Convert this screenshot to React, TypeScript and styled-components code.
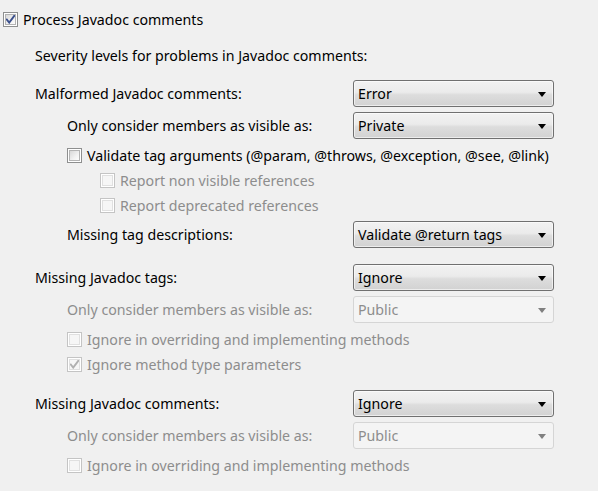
import React from "react";
import styled, { createGlobalStyle, css } from "styled-components";

const Global = createGlobalStyle`
  html, body { margin: 0; padding: 0; background: #f0f0f0; }
  body { font-family: "Noto Sans", "Open Sans", sans-serif; font-size: 14.2px; color: #000; }
`;

const Page = styled.div`
  width: 598px;
  height: 491px;
  padding: 7px 0 0 3px;
  box-sizing: border-box;
  display: flex;
  flex-direction: column;
  overflow: hidden;
`;

const Row = styled.div<{ $mt?: number; $indent?: number; $h?: number }>`
  display: flex;
  align-items: center;
  height: ${(p) => p.$h ?? 25}px;
  margin-top: ${(p) => p.$mt ?? 0}px;
  padding-left: ${(p) => p.$indent ?? 0}px;
  flex-shrink: 0;
`;

const Label = styled.span<{ $disabled?: boolean }>`
  color: ${(p) => (p.$disabled ? "#8d8d8d" : "#000")};
  white-space: nowrap;
`;

const LabelCell = styled.div<{ $indent: number }>`
  width: 350px;
  box-sizing: border-box;
  padding-left: ${(p) => p.$indent}px;
  flex-shrink: 0;
  display: flex;
  align-items: center;
`;

const Box = styled.span<{ $disabled?: boolean }>`
  width: 15px;
  height: 15px;
  box-sizing: border-box;
  flex-shrink: 0;
  border: 1px solid ${(p) => (p.$disabled ? "#c4c4c4" : "#8e8f8f")};
  padding: 1px;
  background: #fff;
  margin-right: 5px;
  display: inline-flex;
`;

const BoxInner = styled.span<{ $disabled?: boolean }>`
  flex: 1;
  display: flex;
  align-items: center;
  justify-content: center;
  ${(p) =>
    p.$disabled
      ? css`
          border: 1px solid #e0e0e0;
          background: #f6f6f6;
        `
      : css`
          border: 1px solid #b3b3b3;
          background: linear-gradient(135deg, #d8d8d8 0%, #f1f1f1 60%, #fdfdfd 100%);
        `}
`;

function Check({ checked, disabled }: { checked?: boolean; disabled?: boolean }) {
  return (
    <Box $disabled={disabled}>
      <BoxInner $disabled={disabled}>
        {checked && (
          <svg width="9" height="9" viewBox="0 0 9 9">
            <path
              d="M0.8 4.6 L3.2 7.6 L8.3 0.8"
              fill="none"
              stroke={disabled ? "#b0b0b0" : "#3a4f8c"}
              strokeWidth="1.9"
              strokeLinecap="square"
            />
          </svg>
        )}
      </BoxInner>
    </Box>
  );
}

const Combo = styled.div<{ $disabled?: boolean }>`
  width: 201px;
  height: 27px;
  box-sizing: border-box;
  border-radius: 3px;
  display: flex;
  align-items: center;
  justify-content: space-between;
  padding: 0 7px 0 4px;
  flex-shrink: 0;
  ${(p) =>
    p.$disabled
      ? css`
          border: 1px solid #d5d5d5;
          background: #f4f4f4;
          color: #8d8d8d;
        `
      : css`
          border: 1px solid #707070;
          background: linear-gradient(#f2f2f2 0%, #ebebeb 45%, #dddddd 55%, #d2d2d2 100%);
          color: #000;
          box-shadow: inset 0 0 0 1px rgba(255, 255, 255, 0.6);
        `}
`;

const Arrow = styled.span<{ $disabled?: boolean }>`
  width: 0;
  height: 0;
  border-left: 4.5px solid transparent;
  border-right: 4.5px solid transparent;
  border-top: 5px solid ${(p) => (p.$disabled ? "#808080" : "#000")};
  margin-top: 1px;
`;

function Select({ value, disabled }: { value: string; disabled?: boolean }) {
  return (
    <Combo $disabled={disabled}>
      <span>{value}</span>
      <Arrow $disabled={disabled} />
    </Combo>
  );
}

function ComboRow({
  label,
  value,
  indent,
  mt,
  disabled,
}: {
  label: string;
  value: string;
  indent: number;
  mt: number;
  disabled?: boolean;
}) {
  return (
    <Row $mt={mt} $h={27}>
      <LabelCell $indent={indent}>
        <Label $disabled={disabled}>{label}</Label>
      </LabelCell>
      <Select value={value} disabled={disabled} />
    </Row>
  );
}

function CheckRow({
  label,
  indent,
  mt,
  checked,
  disabled,
}: {
  label: string;
  indent: number;
  mt?: number;
  checked?: boolean;
  disabled?: boolean;
}) {
  return (
    <Row $mt={mt} $indent={indent}>
      <Check checked={checked} disabled={disabled} />
      <Label $disabled={disabled}>{label}</Label>
    </Row>
  );
}

export default function App() {
  return (
    <>
      <Global />
      <Page>
        <CheckRow label="Process Javadoc comments" indent={0} checked />
        <Row $mt={11} $indent={32}>
          <Label>Severity levels for problems in Javadoc comments:</Label>
        </Row>
        <ComboRow label="Malformed Javadoc comments:" value="Error" indent={32} mt={12} />
        <ComboRow label="Only consider members as visible as:" value="Private" indent={64} mt={5} />
        <CheckRow
          label="Validate tag arguments (@param, @throws, @exception, @see, @link)"
          indent={64}
          mt={4}
        />
        <CheckRow label="Report non visible references" indent={97} disabled />
        <CheckRow label="Report deprecated references" indent={97} disabled />
        <ComboRow label="Missing tag descriptions:" value="Validate @return tags" indent={64} mt={3} />
        <ComboRow label="Missing Javadoc tags:" value="Ignore" indent={32} mt={16} />
        <ComboRow
          label="Only consider members as visible as:"
          value="Public"
          indent={64}
          mt={5}
          disabled
        />
        <CheckRow label="Ignore in overriding and implementing methods" indent={64} mt={4} disabled />
        <CheckRow label="Ignore method type parameters" indent={64} checked disabled />
        <ComboRow label="Missing Javadoc comments:" value="Ignore" indent={32} mt={13} />
        <ComboRow
          label="Only consider members as visible as:"
          value="Public"
          indent={64}
          mt={5}
          disabled
        />
        <CheckRow label="Ignore in overriding and implementing methods" indent={64} mt={4} disabled />
      </Page>
    </>
  );
}
